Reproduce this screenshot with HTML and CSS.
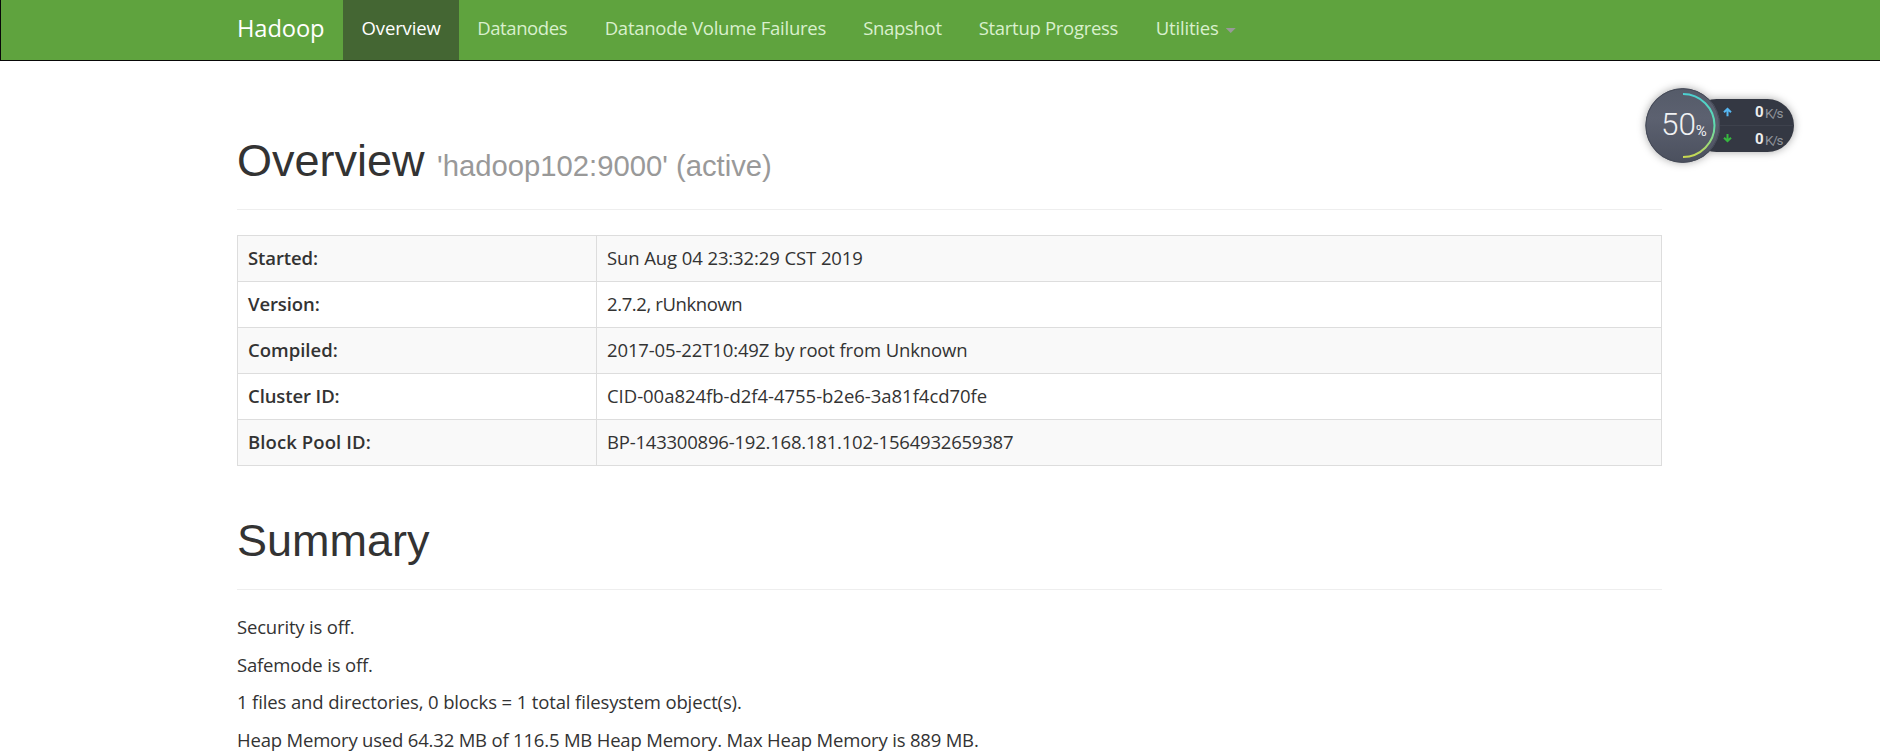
FILE: index.html
```
<!DOCTYPE html>
<html lang="en">
<head>
<meta charset="utf-8">
<title>Namenode information</title>
<link rel="stylesheet" href="styles.css">
</head>
<body>
<header class="navbar">
  <nav class="navbar-inner">
    <a class="brand">Hadoop</a>
    <a class="link active">Overview</a>
    <a class="link datanodes">Datanodes</a>
    <a class="link failures">Datanode Volume Failures</a>
    <a class="link snapshot">Snapshot</a>
    <a class="link startup">Startup Progress</a>
    <a class="link utilities">Utilities<span class="caret"></span></a>
  </nav>
</header>

<main class="container">
  <div class="page-header"><h1>Overview <small>'hadoop102:9000' (active)</small></h1></div>
  <table class="info">
    <tr><th class="t-started">Started:</th><td class="v-started">Sun Aug 04 23:32:29 CST 2019</td></tr>
    <tr><th>Version:</th><td class="v-version">2.7.2, rUnknown</td></tr>
    <tr><th class="t-compiled">Compiled:</th><td class="v-compiled">2017-05-22T10:49Z by root from Unknown</td></tr>
    <tr><th>Cluster ID:</th><td class="v-cluster">CID-00a824fb-d2f4-4755-b2e6-3a81f4cd70fe</td></tr>
    <tr><th class="t-pool">Block Pool ID:</th><td class="v-pool">BP-143300896-192.168.181.102-1564932659387</td></tr>
  </table>
  <div class="page-header summary"><h1>Summary</h1></div>
  <p>Security is off.</p>
  <p>Safemode is off.</p>
  <p class="files">1 files and directories, 0 blocks = 1 total filesystem object(s).</p>
  <p class="heap">Heap Memory used 64.32 MB of 116.5 MB Heap Memory. Max Heap Memory is 889 MB.</p>
</main>

<svg class="monitor" width="180" height="100" viewBox="0 0 180 100">
  <defs>
    <linearGradient id="disc" x1="0" y1="0" x2="0" y2="1">
      <stop offset="0" stop-color="#555b69"/><stop offset=".4" stop-color="#5c6170"/><stop offset="1" stop-color="#4b505e"/>
    </linearGradient>
    <linearGradient id="arc" x1="0" y1="0" x2="0" y2="1">
      <stop offset="0" stop-color="#4ccfd0"/><stop offset=".5" stop-color="#5fdcae"/><stop offset="1" stop-color="#c9d850"/>
    </linearGradient>
  </defs>
  <g class="shadowed">
    <rect x="60" y="24" width="104" height="53" rx="26.5" fill="#343843"/>
    <circle cx="52.7" cy="50.5" r="37.3" fill="url(#disc)"/>
  </g>
  <path d="M80 50.5H163" stroke="#3e424d" stroke-width="1"/>
  <circle cx="52.7" cy="50.5" r="36.8" fill="url(#disc)" stroke="#454a57"/>
  <path d="M53 19a31.5 31.5 0 0 1 0 63" fill="none" stroke="url(#arc)" stroke-width="2"/>
  <text class="load" x="31" y="60.3" textLength="35" lengthAdjust="spacingAndGlyphs">50</text>
  <text class="percent" x="65.8" y="60.5" textLength="11" lengthAdjust="spacingAndGlyphs">%</text>
  <path d="M97.5 41.2v-7M94 37.2l3.5-3.3 3.5 3.3" fill="none" stroke="#56b7f2" stroke-width="2"/>
  <path d="M97.5 59v7M94 62.8l3.5 3.3 3.5-3.3" fill="none" stroke="#36b83f" stroke-width="2"/>
  <text class="rate" x="125" y="42">0</text><text class="unit" x="135" y="43" textLength="18.5">K/s</text>
  <text class="rate" x="125" y="69.3">0</text><text class="unit" x="135" y="69.6" textLength="18.5">K/s</text>
</svg>
</body>
</html>
```

FILE: styles.css
```
* { box-sizing: border-box; }
body {
  margin: 0;
  height: 755px;
  overflow: hidden;
  background: #fff;
  color: #333;
  font: 18.5px/27px "Open Sans", "Segoe UI", sans-serif;
}
.navbar {
  height: 61px;
  background: #5fa33e;
  border-left: 1px solid #080808;
  border-bottom: 1px solid #080808;
}
.navbar-inner { display: flex; height: 60px; padding-left: 217px; white-space: nowrap; }
.brand {
  width: 125px;
  padding: 15px 18px 0 19px;
  color: #fff;
  font-size: 23.7px;
  letter-spacing: -.1px;
}
.link { padding: 14px 18.6px 0; color: #d9f0cd; letter-spacing: -.22px; }
.link.active { width: 115.6px; background: #446633; color: #fff; letter-spacing: -.15px; }
.datanodes { width: 127.5px; letter-spacing: -.4px; }
.failures { width: 258.5px; letter-spacing: -.25px; }
.snapshot { width: 115.5px; letter-spacing: -.31px; }
.startup { width: 177px; letter-spacing: -.29px; }
.utilities { display: flex; letter-spacing: -.17px; }
.caret {
  margin: 14px 0 0 7px;
  width: 10px;
  height: 5px;
  background: #999;
  clip-path: polygon(0 0, 100% 0, 50% 100%);
}
.container { width: 1425px; margin-left: 237px; }
.page-header { height: 149px; padding-top: 75px; border-bottom: 1px solid #eee; }
.page-header.summary { height: 124px; padding-top: 50px; margin-bottom: 23px; }
h1 {
  margin: 0;
  font: 500 45px/49px "Liberation Sans", Arial, sans-serif;
}
h1 small { font-size: 29.25px; font-weight: 400; color: #999; }
.info { width: 1425px; margin-top: 25px; border-collapse: collapse; table-layout: fixed; }
.info th, .info td {
  height: 46px;
  padding: 0 10px 2px;
  border: 1px solid #ddd;
  text-align: left;
  letter-spacing: -.1px;
}
.info th { width: 359px; font-weight: 600; }
.info tr:nth-child(odd) { background: #f9f9f9; }
.info .t-compiled { letter-spacing: 0; }
.info .t-pool { letter-spacing: .1px; }
.info .v-version { letter-spacing: -.4px; }
.info .v-compiled { letter-spacing: -.13px; }
.info .v-cluster { letter-spacing: -.03px; }
.info .v-pool { letter-spacing: -.21px; }
p { margin: 0 0 10.7px; letter-spacing: -.18px; }
.files { letter-spacing: -.13px; }
.heap { letter-spacing: -.19px; }
.monitor { position: absolute; left: 1630px; top: 75px; font-family: Roboto, sans-serif; }
.shadowed { filter: drop-shadow(0 0 4px rgba(0, 0, 0, .35)); }
.load { font-size: 31.5px; font-weight: 300; fill: #f0f1f3; }
.percent { font-size: 14px; fill: #f0f1f3; }
.rate { font-size: 15px; font-weight: 700; fill: #eee; }
.unit { font-size: 13.5px; fill: #90949c; }
```
